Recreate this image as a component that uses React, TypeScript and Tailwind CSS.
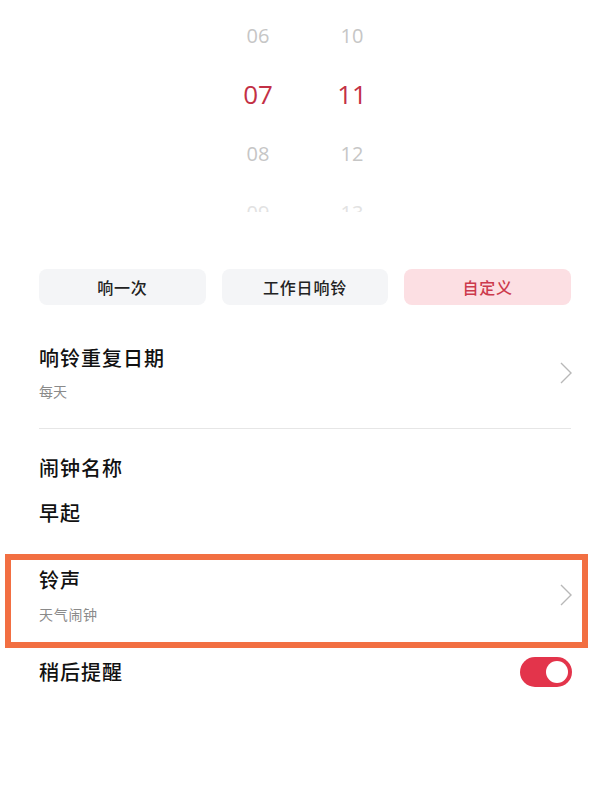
const digitFont = { fontFamily: '"Open Sans", "Noto Sans", sans-serif' };

function Chevron() {
  return (
    <svg width="14" height="22" viewBox="0 0 14 22" fill="none" className="shrink-0">
      <polyline points="2,1 12,11 2,21" stroke="#b8b8b8" strokeWidth="1.4" strokeLinejoin="miter" />
    </svg>
  );
}

function Column({ items }: { items: string[] }) {
  return (
    <div className="w-[60px] flex flex-col items-center">
      {items.map((n, i) => (
        <div
          key={n}
          className={`h-[59px] shrink-0 flex items-center justify-center ${
            i === 1
              ? "text-[26px] text-[#c33045]"
              : i === 3
              ? "text-[20px] text-[#e2e2e2]"
              : "text-[20px] text-[#c6c6c6]"
          }`}
          style={digitFont}
        >
          {n}
        </div>
      ))}
    </div>
  );
}

export default function App() {
  const modes = ["响一次", "工作日响铃", "自定义"];

  return (
    <div
      className="w-[597px] h-[809px] bg-white overflow-hidden text-[#111]"
      style={{ fontFamily: '"Noto Sans CJK SC", "Noto Sans", sans-serif' }}
    >
      {/* time picker */}
      <div className="h-[212px] overflow-hidden pt-[6px] pl-[228px] flex items-start gap-[34px]">
        <Column items={["06", "07", "08", "09"]} />
        <Column items={["10", "11", "12", "13"]} />
      </div>

      {/* repeat modes */}
      <div className="mt-[57px] pl-[39px] pr-[26px] grid grid-cols-3 gap-4">
        {modes.map((m, i) => (
          <div
            key={m}
            className={`h-9 rounded-lg flex items-center justify-center text-[16px] font-medium tracking-wider ${
              i === 2 ? "bg-[#fcdfe3] text-[#cc3a4c]" : "bg-[#f4f5f7] text-[#222]"
            }`}
          >
            {m}
          </div>
        ))}
      </div>

      {/* repeat date */}
      <div className="mt-[39px] pl-[39px] pr-[24px] flex items-center justify-between">
        <div>
          <div className="text-[20px] leading-[28px] font-medium tracking-wider">响铃重复日期</div>
          <div className="mt-[9px] text-[14px] leading-[20px] text-[#8a8a8a]">每天</div>
        </div>
        <Chevron />
      </div>

      <div className="mt-[27px] ml-[39px] mr-[26px] h-px bg-[#e6e6e6]" />

      {/* alarm name */}
      <div className="mt-[25px] px-[39px]">
        <div className="text-[20px] leading-[28px] font-medium tracking-wider">闹钟名称</div>
        <div className="mt-[17px] text-[20px] leading-[28px] font-medium tracking-wider">早起</div>
      </div>

      {/* ringtone (highlighted) */}
      <div className="mt-[27px] ml-[5px] mr-[9px] border-[6px] border-[#f26f42]">
        <div className="pt-[6px] pb-[18px] pl-[28px] pr-[9px] flex items-center justify-between">
          <div>
            <div className="text-[20px] leading-[28px] font-medium tracking-wider">铃声</div>
            <div className="mt-[10px] text-[14px] leading-[20px] text-[#8a8a8a] tracking-wider">天气闹钟</div>
          </div>
          <Chevron />
        </div>
      </div>

      {/* snooze */}
      <div className="mt-[9px] pl-[39px] pr-[25px] flex items-center justify-between">
        <div className="text-[20px] leading-[28px] font-medium tracking-wider">稍后提醒</div>
        <div className="w-[52px] h-[30px] rounded-full bg-[#e3344b] flex items-center justify-end pr-[4px]">
          <div className="w-[22px] h-[22px] rounded-full bg-white" />
        </div>
      </div>
    </div>
  );
}
